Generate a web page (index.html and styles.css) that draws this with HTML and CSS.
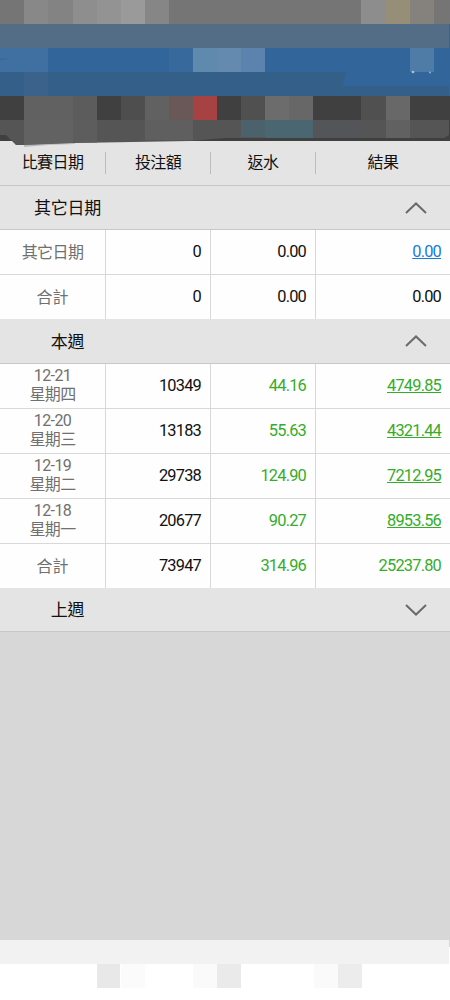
FILE: index.html
```
<!DOCTYPE html>
<html lang="zh-Hant">

<head>
    <meta charset="UTF-8">
    <meta name="viewport" content="width=device-width, initial-scale=1.0">
    <title>結果</title>
    <link rel="stylesheet" href="styles.css">
</head>

<body>

    <div class="page">

        <svg class="mosaic" width="450" height="141" viewBox="0 0 450 141">
            <!-- status bar -->
            <rect width="450" height="25" fill="#757575" />
            <rect x="24" width="24" height="24" fill="#888888" />
            <rect x="48" width="25" height="24" fill="#838383" />
            <rect x="73" width="24" height="24" fill="#8e8e8e" />
            <rect x="97" width="24" height="24" fill="#939393" />
            <rect x="121" width="24" height="24" fill="#9a9a9a" />
            <rect x="145" width="24" height="24" fill="#868686" />
            <rect x="361" width="25" height="24" fill="#8d8d8d" />
            <rect x="386" width="24" height="24" fill="#968e76" />
            <rect x="410" width="24" height="24" fill="#85827d" />
            <!-- blue bar -->
            <rect y="24" width="450" height="72" fill="#32669a" />
            <rect y="24" width="449" height="24" fill="#536d87" />
            <rect y="48" width="48" height="24" fill="#4070a2" />
            <rect x="169" y="48" width="24" height="24" fill="#38699d" />
            <rect x="193" y="48" width="24" height="24" fill="#5f8aae" />
            <rect x="217" y="48" width="24" height="24" fill="#658ab0" />
            <rect x="241" y="48" width="24" height="24" fill="#5c83ae" />
            <rect x="410" y="48" width="24" height="24" fill="#4f7ba7" />
            <path d="M0 58.5H11L0 60z" fill="#32669a" />
            <path d="M0 72H346L343 86H449V96H0z" fill="#345f88" />
            <rect x="24" y="72" width="24" height="24" fill="#3b628a" />
            <circle cx="413" cy="72" r="1.3" fill="#a9c1da" />
            <circle cx="430" cy="72.5" r="1" fill="#8fb0d0" />
            <!-- dark bar -->
            <rect y="96" width="450" height="45" fill="#404040" />
            <path d="M0 120H449V135L444 138H225L190 141L75 143L24 145H16L6 135H0z" fill="#555555" />
            <path d="M24 145L75 143V144L48 145L24 147z" fill="#bababa" />
            <rect x="24" y="96" width="49" height="24" fill="#616161" />
            <rect x="73" y="96" width="24" height="24" fill="#5c5c5c" />
            <rect x="121" y="96" width="24" height="24" fill="#4e4e4e" />
            <rect x="145" y="96" width="24" height="24" fill="#616161" />
            <rect x="169" y="96" width="24" height="24" fill="#695857" />
            <rect x="193" y="96" width="24" height="24" fill="#a64242" />
            <rect x="241" y="96" width="24" height="24" fill="#505050" />
            <rect x="265" y="96" width="24" height="24" fill="#6c6c6c" />
            <rect x="289" y="96" width="24" height="24" fill="#676767" />
            <rect x="361" y="96" width="25" height="24" fill="#505050" />
            <rect x="386" y="96" width="24" height="24" fill="#686868" />
            <path d="M24 120H73V143L24 145z" fill="#626262" />
            <rect x="73" y="120" width="24" height="22.5" fill="#5d5d5d" />
            <rect x="145" y="120" width="48" height="20" fill="#5f5f5f" />
            <rect x="241" y="120" width="24" height="17" fill="#4b626c" />
            <rect x="265" y="120" width="48" height="18" fill="#4a6671" />
            <rect x="313" y="120" width="48" height="18" fill="#535558" />
            <rect x="386" y="120" width="24" height="18" fill="#616161" />
        </svg>

        <div class="row head">
            <div class="cell">比賽日期</div>
            <div class="cell">投注額</div>
            <div class="cell">返水</div>
            <div class="cell">結果</div>
        </div>

        <div class="section">
            <span class="title">其它日期</span>
            <svg class="arrow" width="22" height="12" viewBox="0 0 22 12"><path d="M1 11L11 1.5L21 11" /></svg>
        </div>
        <div class="row">
            <div class="cell date">其它日期</div>
            <div class="cell">0</div>
            <div class="cell">0.00</div>
            <div class="cell"><a class="blue">0.00</a></div>
        </div>
        <div class="row last">
            <div class="cell date total">合計</div>
            <div class="cell">0</div>
            <div class="cell">0.00</div>
            <div class="cell">0.00</div>
        </div>

        <div class="section open">
            <span class="title">本週</span>
            <svg class="arrow" width="22" height="12" viewBox="0 0 22 12"><path d="M1 11L11 1.5L21 11" /></svg>
        </div>
        <div class="row win">
            <div class="cell date day">12-21<br>星期四</div>
            <div class="cell">10349</div>
            <div class="cell">44.16</div>
            <div class="cell"><a>4749.85</a></div>
        </div>
        <div class="row win">
            <div class="cell date day">12-20<br>星期三</div>
            <div class="cell">13183</div>
            <div class="cell">55.63</div>
            <div class="cell"><a>4321.44</a></div>
        </div>
        <div class="row win">
            <div class="cell date day">12-19<br>星期二</div>
            <div class="cell">29738</div>
            <div class="cell">124.90</div>
            <div class="cell"><a>7212.95</a></div>
        </div>
        <div class="row win">
            <div class="cell date day">12-18<br>星期一</div>
            <div class="cell">20677</div>
            <div class="cell">90.27</div>
            <div class="cell"><a>8953.56</a></div>
        </div>
        <div class="row win last">
            <div class="cell date total">合計</div>
            <div class="cell">73947</div>
            <div class="cell">314.96</div>
            <div class="cell">25237.80</div>
        </div>

        <div class="section">
            <span class="title">上週</span>
            <svg class="arrow" width="22" height="12" viewBox="0 0 22 12"><path d="M1 1L11 10.5L21 1" /></svg>
        </div>

        <div class="empty"></div>

        <svg class="navbar" width="450" height="60" viewBox="0 0 450 60">
            <rect width="450" height="60" fill="#ffffff" />
            <rect width="449" height="24" fill="#f2f2f2" />
            <rect x="449" width="1" height="7" fill="#d7d7d7" />
            <rect x="97" y="24" width="23" height="24" fill="#e8e8e8" />
            <rect x="121" y="24" width="24" height="24" fill="#fbfbfb" />
            <rect x="193" y="24" width="24" height="24" fill="#fafafa" />
            <rect x="217" y="24" width="24" height="24" fill="#eaeaea" />
            <rect x="314" y="24" width="24" height="24" fill="#fafafa" />
            <rect x="338" y="24" width="24" height="24" fill="#ececec" />
        </svg>

    </div>

</body>

</html>
```
FILE: styles.css
```
* {
    margin: 0;
    padding: 0;
    box-sizing: border-box;
}

body {
    font-family: Roboto, "Noto Sans CJK TC", sans-serif;
    font-size: 16px;
    letter-spacing: -0.6px;
    color: #111;
    background: #d7d7d7;
}

.page {
    display: flex;
    flex-direction: column;
    width: 450px;
    height: 1000px;
    overflow: hidden;
}

.mosaic {
    display: block;
    position: relative;
    overflow: visible;
    flex: none;
}

/* TABLE ROWS ================================= */
.row {
    display: grid;
    grid-template-columns: 106px 105px 105px 134px;
    flex: none;
    height: 45px;
    background: #fefefe;
    border-bottom: 1px solid #d8d8d8;
}

.row.last {
    height: 44px;
    border-bottom: none;
}

.cell {
    display: flex;
    align-items: center;
    justify-content: flex-end;
    padding-right: 9px;
    font-size: 16.4px;
    letter-spacing: -0.8px;
    line-height: 18px;
    border-right: 1px solid #d8d8d8;
}

.cell:last-child {
    border-right: none;
}

.cell.date {
    justify-content: center;
    padding-right: 0;
    text-align: center;
    font-size: 16px;
    letter-spacing: -0.6px;
    line-height: 19px;
    color: #707070;
}

.cell.day {
    padding-bottom: 3px;
}

.cell.total {
    letter-spacing: 0;
}

.cell a {
    text-decoration: underline;
    text-decoration-thickness: 1px;
    text-underline-offset: 1px;
}

.blue {
    color: #1a7bd8;
}

.win .cell:nth-child(n+3) {
    color: #35ac2b;
}

/* HEAD ======================================= */
.head {
    align-items: center;
    background: #e4e4e4;
    border-bottom-color: #c6c6c6;
}

.head .cell {
    justify-content: center;
    height: 22px;
    padding-right: 0;
    font-size: 16px;
    letter-spacing: -0.6px;
    border-right-color: #bcbcbc;
}

/* SECTIONS =================================== */
.section {
    display: flex;
    align-items: center;
    justify-content: space-between;
    flex: none;
    height: 44px;
    padding-right: 23px;
    background: #e4e4e4;
    border-bottom: 1px solid #c8c8c8;
}

.section.open {
    height: 45px;
}

.title {
    width: 135px;
    padding-bottom: 2px;
    text-align: center;
    font-size: 17px;
    letter-spacing: -0.2px;
}

.arrow {
    fill: none;
    stroke: #6a6a6a;
    stroke-width: 2;
}

.empty {
    flex: 1;
}

.navbar {
    display: block;
    flex: none;
}
```
